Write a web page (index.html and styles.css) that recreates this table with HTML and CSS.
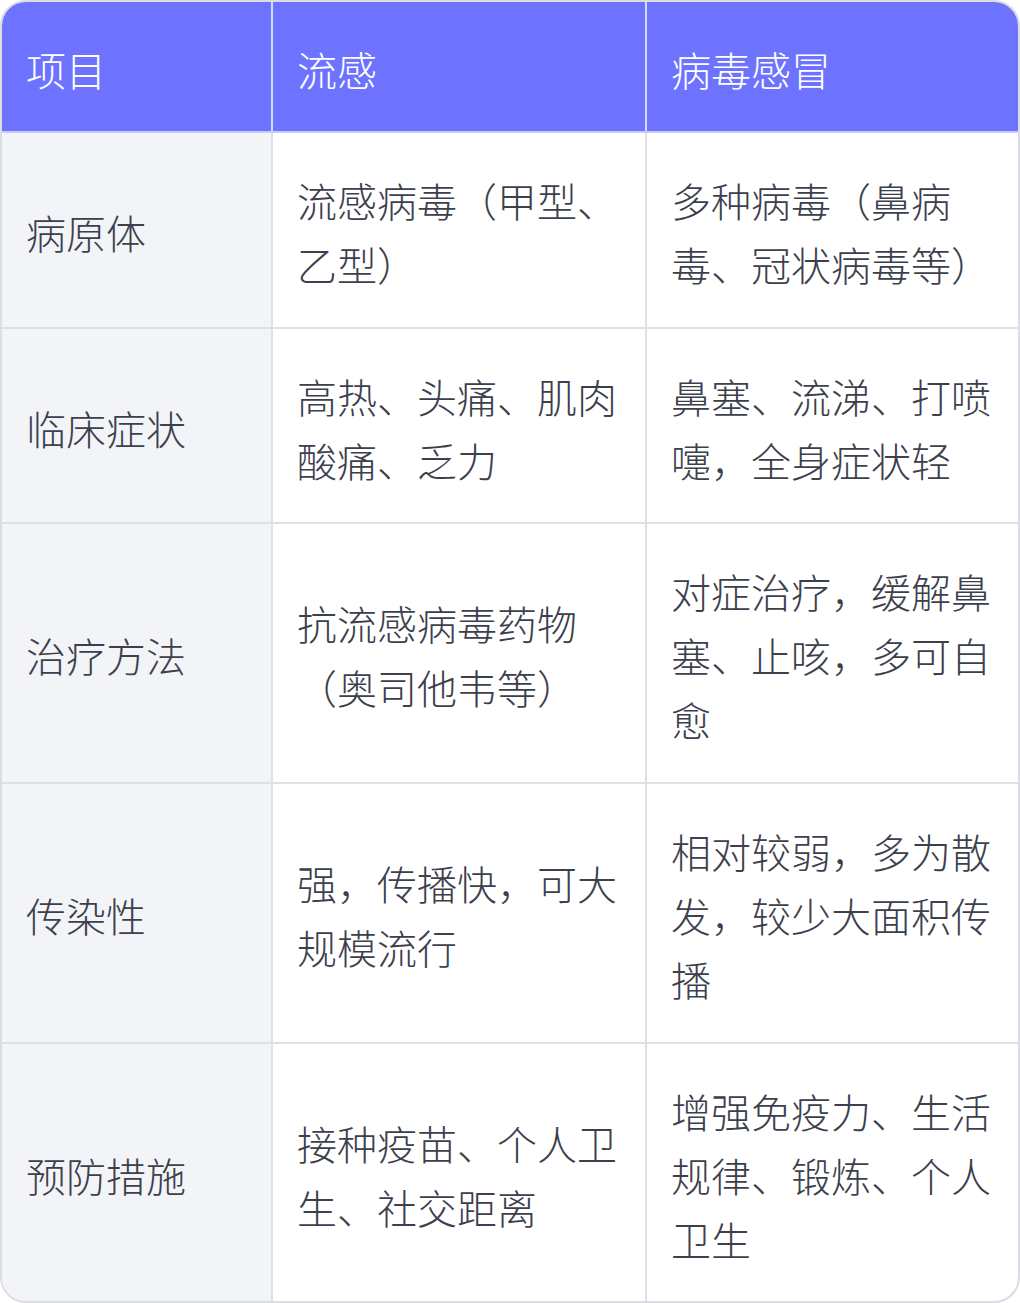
FILE: index.html
```html
<!DOCTYPE html>
<html lang="zh">
<head>
<meta charset="utf-8">
<link rel="stylesheet" href="styles.css">
</head>
<body>
<div class="wrap">
<table class="cmp">
<colgroup><col class="c1"><col class="c2"><col class="c3"></colgroup>
<thead>
<tr><th>项目</th><th>流感</th><th>病毒感冒</th></tr>
</thead>
<tbody>
<tr><td>病原体</td><td>流感病毒（甲型、乙型）</td><td>多种病毒（鼻病毒、冠状病毒等）</td></tr>
<tr><td>临床症状</td><td>高热、头痛、肌肉酸痛、乏力</td><td>鼻塞、流涕、打喷嚏，全身症状轻</td></tr>
<tr><td>治疗方法</td><td>抗流感病毒药物（奥司他韦等）</td><td>对症治疗，缓解鼻塞、止咳，多可自愈</td></tr>
<tr><td>传染性</td><td>强，传播快，可大规模流行</td><td>相对较弱，多为散发，较少大面积传播</td></tr>
<tr><td>预防措施</td><td>接种疫苗、个人卫生、社交距离</td><td>增强免疫力、生活规律、锻炼、个人卫生</td></tr>
</tbody>
</table>
</div>
</body>
</html>
```

FILE: styles.css
```css
html, body {
  margin: 0;
  padding: 0;
  background: #ffffff;
}
.wrap {
  width: 1020px;
  height: 1303px;
  box-sizing: border-box;
  border: 2px solid #dcdde2;
  border-radius: 26px;
  overflow: hidden;
  background: #ffffff;
}
.cmp {
  width: 100%;
  height: 100%;
  border-collapse: collapse;
  table-layout: fixed;
  font-family: "Noto Sans CJK SC", "Noto Sans", sans-serif;
  font-size: 40px;
  line-height: 64px;
  color: #3c404c;
}
.c1 { width: 270px; }
.c2 { width: 374px; }
.c3 { width: auto; }
.cmp th, .cmp td {
  text-align: left;
  vertical-align: middle;
  padding: 4px 24px 0 24px;
  border-right: 2px solid #dfe0e5;
  border-bottom: 2px solid #dfe0e5;
  font-weight: 300;
}
.cmp th:last-child, .cmp td:last-child { border-right: none; }
.cmp tbody tr:last-child td { border-bottom: none; }
.cmp thead th {
  background: #6e73ff;
  color: #ffffff;
  height: 125px;
  border-bottom-color: #c9cbf2;
  border-right-color: #d9daf6;
}
.cmp tbody td:first-child {
  background: #f3f4f8;
}
.cmp tbody tr:nth-child(1) td { height: 190px; }
.cmp tbody tr:nth-child(2) td { height: 189px; }
.cmp tbody tr:nth-child(3) td { height: 254px; }
.cmp tbody tr:nth-child(4) td { height: 254px; }
.cmp tbody tr:nth-child(5) td { height: 254px; }
```
